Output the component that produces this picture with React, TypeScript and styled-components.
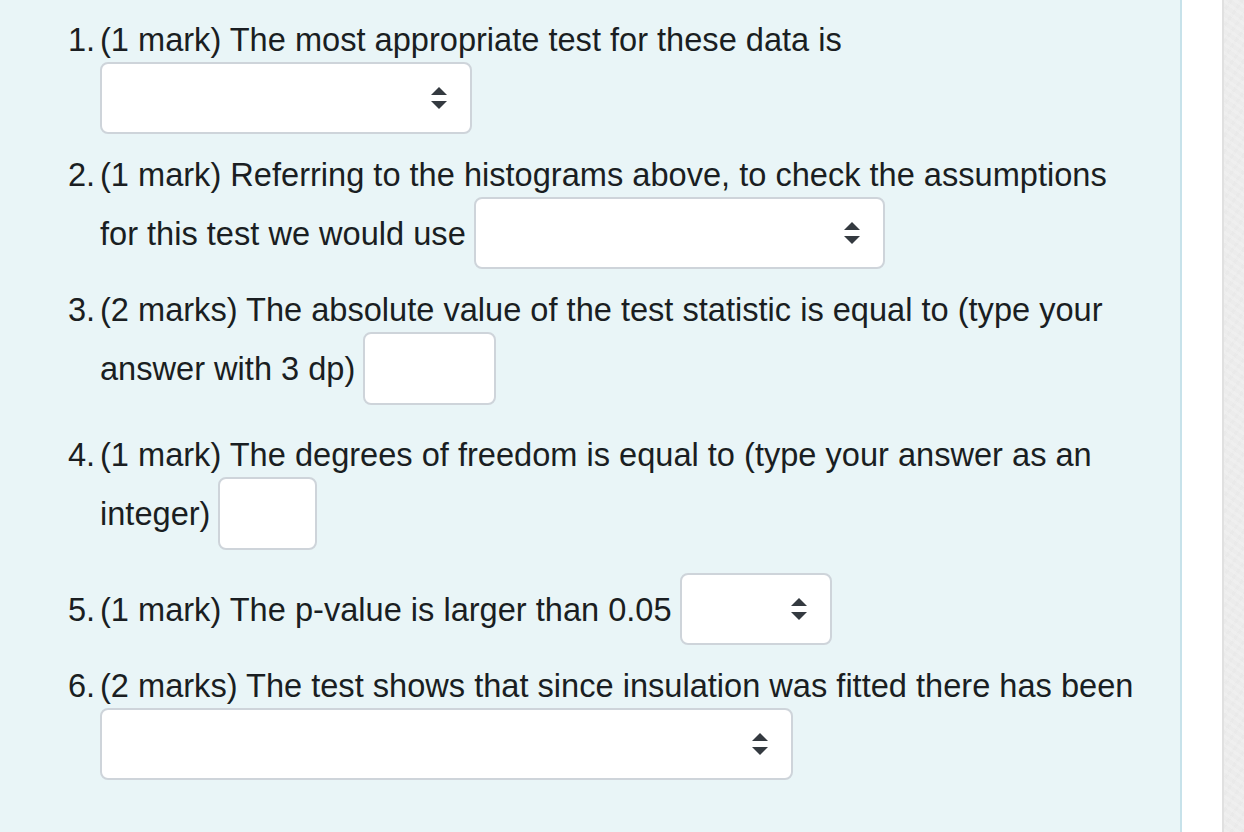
import React from 'react'
import styled, { createGlobalStyle } from 'styled-components'

const GlobalStyle = createGlobalStyle`
  html, body {
    margin: 0;
    padding: 0;
    height: 100%;
  }
  body {
    font-family: "Liberation Sans", Arial, sans-serif;
    color: #1a1e22;
    overflow: hidden;
  }
`

interface SelectProps {
  width: number
}

const Arrows = () => (
  <svg width='16' height='22' viewBox='0 0 16 22'>
    <path d='M8 0 L16 8 L0 8 Z' fill='#343a40' />
    <path d='M8 22 L16 14 L0 14 Z' fill='#343a40' />
  </svg>
)

const Select: React.FC<SelectProps> = ({ width }) => (
  <SelectWrap $width={width}>
    <SelectBox defaultValue=''>
      <option value=''></option>
    </SelectBox>
    <ArrowSlot>
      <Arrows />
    </ArrowSlot>
  </SelectWrap>
)

const App: React.FC = () => {
  return (
    <Page>
      <GlobalStyle />
      <Panel>
        <Item>
          <Line>
            <Num>1.</Num>
            <Text>(1 mark) The most appropriate test for these data is</Text>
          </Line>
          <Line $indent>
            <Select width={372} />
          </Line>
        </Item>

        <Item>
          <Line>
            <Num>2.</Num>
            <Text>(1 mark) Referring to the histograms above, to check the assumptions</Text>
          </Line>
          <Line $indent>
            <Text>for this test we would use</Text>
            <Select width={411} />
          </Line>
        </Item>

        <Item $space={27}>
          <Line>
            <Num>3.</Num>
            <Text>(2 marks) The absolute value of the test statistic is equal to (type your</Text>
          </Line>
          <Line $indent>
            <Text>answer with 3 dp)</Text>
            <Field $width={133} type='text' />
          </Line>
        </Item>

        <Item $space={23}>
          <Line>
            <Num>4.</Num>
            <Text>(1 mark) The degrees of freedom is equal to (type your answer as an</Text>
          </Line>
          <Line $indent>
            <Text>integer)</Text>
            <Field $width={99} type='text' />
          </Line>
        </Item>

        <Item>
          <Line>
            <Num>5.</Num>
            <Text>(1 mark) The p-value is larger than 0.05</Text>
            <Select width={152} />
          </Line>
        </Item>

        <Item>
          <Line>
            <Num>6.</Num>
            <Text>(2 marks) The test shows that since insulation was fitted there has been</Text>
          </Line>
          <Line $indent>
            <Select width={693} />
          </Line>
        </Item>
      </Panel>
      <Gutter />
      <Strip />
    </Page>
  )
}

const Page = styled.div`
  display: flex;
  height: 832px;
  width: 1244px;
`

const Panel = styled.div`
  width: 1112px;
  flex-shrink: 0;
  background: #e9f5f7;
  border-right: 2px solid #c7e2ea;
  padding: 17px 0 0 68px;
  font-size: 32.6px;
  line-height: 45px;
`

const Gutter = styled.div`
  width: 40px;
  background: #ffffff;
`

const Strip = styled.div`
  flex: 1;
  border-left: 2px solid #e0e0e0;
  background-color: #ececec;
  background-image: repeating-linear-gradient(
      35deg,
      rgba(255, 255, 255, 0.18) 0 3px,
      transparent 3px 7px
    ),
    repeating-linear-gradient(
      -55deg,
      rgba(0, 0, 0, 0.012) 0 3px,
      transparent 3px 9px
    );
`

const Item = styled.div<{ $space?: number }>`
  display: flex;
  flex-direction: column;
  margin-bottom: ${(p) => p.$space ?? 18}px;
`

const Line = styled.div<{ $indent?: boolean }>`
  display: flex;
  align-items: center;
  min-height: 45px;
  padding-left: ${(p) => (p.$indent ? 32 : 0)}px;
`

const Num = styled.span`
  width: 32px;
  flex-shrink: 0;
  white-space: nowrap;
`

const Text = styled.span`
  white-space: nowrap;
  margin-right: 8px;
`

const SelectWrap = styled.div<{ $width: number }>`
  position: relative;
  width: ${(p) => p.$width}px;
  height: 72px;
  flex-shrink: 0;
`

const SelectBox = styled.select`
  appearance: none;
  -webkit-appearance: none;
  width: 100%;
  height: 100%;
  box-sizing: border-box;
  background: #ffffff;
  border: 2px solid #ced4da;
  border-radius: 8px;
  outline: none;
  font: inherit;
`

const ArrowSlot = styled.span`
  position: absolute;
  right: 25px;
  top: 50%;
  transform: translateY(-50%);
  display: flex;
  pointer-events: none;
`

const Field = styled.input<{ $width: number }>`
  width: ${(p) => p.$width}px;
  height: 73px;
  box-sizing: border-box;
  flex-shrink: 0;
  background: #ffffff;
  border: 2px solid #ced4da;
  border-radius: 8px;
  outline: none;
  font: inherit;
  padding: 0 12px;
`

export default App
